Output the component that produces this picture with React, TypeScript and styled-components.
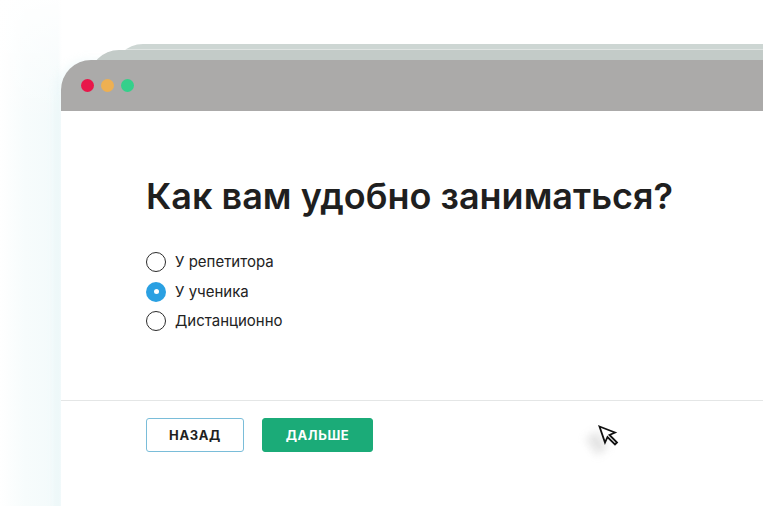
import React from "react";
import styled, { createGlobalStyle } from "styled-components";

const Global = createGlobalStyle`
  html, body { margin: 0; padding: 0; }
  body {
    width: 763px;
    height: 506px;
    overflow: hidden;
    background:
      linear-gradient(180deg, rgba(255,255,255,0.9) 0px, rgba(255,255,255,0) 120px),
      linear-gradient(90deg, #ffffff 0px, #f7fcfc 25px, #f3fafb 58px, #ffffff 62px);
    font-family: Inter, "Noto Sans", Roboto, sans-serif;
  }
`;

const Stage = styled.div`
  width: 763px;
  height: 506px;
  overflow: hidden;
  padding: 60px 0 0 61px;
  box-sizing: border-box;
`;

const Window = styled.div`
  position: relative;
  width: 760px;
  height: 460px;
  background: #ffffff;
  border-top-left-radius: 30px;
  box-shadow: -4px 0 10px rgba(210, 238, 242, 0.3);

  &::before,
  &::after {
    content: "";
    position: absolute;
    right: -40px;
    height: 40px;
    border-top-left-radius: 30px;
    z-index: 0;
  }
  &::before {
    left: 28px;
    top: -10px;
    background: #c3cbc8;
  }
  &::after {
    left: 52px;
    top: -16px;
    background: linear-gradient(180deg, #cdd6d3 0px, #cdd6d3 5px, #dfe4e2 5px, #dfe4e2 6px, #c2cbc8 6px);
    z-index: -1;
  }
`;

const TitleBar = styled.div`
  position: relative;
  z-index: 1;
  height: 51px;
  background: #abaaa9;
  border-top-left-radius: 30px;
  display: flex;
  align-items: center;
  gap: 7px;
  padding-left: 20px;
`;

const Dot = styled.span<{ $c: string }>`
  width: 13px;
  height: 13px;
  border-radius: 50%;
  background: ${(p) => p.$c};
`;

const Body = styled.div`
  position: relative;
  z-index: 1;
  background: #ffffff;
  padding: 63px 0 0 85px;
`;

const Title = styled.h1`
  margin: 0;
  font-family: Inter, "Noto Sans", sans-serif;
  font-weight: 600;
  font-size: 36px;
  line-height: 44px;
  color: #1f1f1f;
  letter-spacing: 0;
`;

const Options = styled.div`
  margin-top: 34px;
  display: flex;
  flex-direction: column;
  gap: 9.5px;
`;

const Option = styled.label`
  display: flex;
  align-items: center;
  gap: 9px;
  font-size: 15px;
  line-height: 20px;
  color: #222222;
  font-family: Inter, "Noto Sans", sans-serif;
`;

const Radio = styled.span<{ $on?: boolean }>`
  width: 20px;
  height: 20px;
  box-sizing: border-box;
  border-radius: 50%;
  border: ${(p) => (p.$on ? "none" : "1.5px solid #2b2b2b")};
  background: ${(p) => (p.$on ? "#2aa0e2" : "#ffffff")};
  display: flex;
  align-items: center;
  justify-content: center;
  &::after {
    content: "";
    width: 5px;
    height: 5px;
    border-radius: 50%;
    background: #ffffff;
    display: ${(p) => (p.$on ? "block" : "none")};
  }
`;

const Divider = styled.div`
  position: relative;
  z-index: 1;
  margin-top: 69px;
  height: 1px;
  background: #e4e6e6;
`;

const Footer = styled.div`
  position: relative;
  z-index: 1;
  display: flex;
  align-items: flex-start;
  gap: 18px;
  padding: 17px 0 0 85px;
`;

const Button = styled.button<{ $primary?: boolean }>`
  height: 34px;
  width: ${(p) => (p.$primary ? "111px" : "98px")};
  box-sizing: border-box;
  border-radius: 3px;
  border: 1px solid ${(p) => (p.$primary ? "#1bab78" : "#7abdd9")};
  background: ${(p) => (p.$primary ? "#1bab78" : "#ffffff")};
  color: ${(p) => (p.$primary ? "#ffffff" : "#1f1f1f")};
  font-family: Inter, "Noto Sans", sans-serif;
  font-weight: 700;
  font-size: 13px;
  letter-spacing: 0.6px;
  padding: 0;
`;

const Spacer = styled.div`
  flex: 0 0 189px;
`;

const Cursor = styled.div`
  position: relative;
  margin-top: 7px;
  width: 22px;
  height: 22px;
  &::before {
    content: "";
    position: absolute;
    left: -8px;
    top: 8px;
    width: 14px;
    height: 20px;
    background: rgba(130, 130, 130, 0.22);
    filter: blur(4px);
    transform: rotate(-35deg);
  }
  svg {
    position: relative;
  }
`;

export default function App() {
  return (
    <>
      <Global />
      <Stage>
        <Window>
          <TitleBar>
            <Dot $c="#e8174a" />
            <Dot $c="#eeb052" />
            <Dot $c="#34d08b" />
          </TitleBar>
          <Body>
            <Title>Как вам удобно заниматься?</Title>
            <Options>
              <Option>
                <Radio />У репетитора
              </Option>
              <Option>
                <Radio $on />У ученика
              </Option>
              <Option>
                <Radio />Дистанционно
              </Option>
            </Options>
          </Body>
          <Divider />
          <Footer>
            <Button>НАЗАД</Button>
            <Button $primary>ДАЛЬШЕ</Button>
            <Spacer />
            <Cursor>
              <svg width="22" height="22" viewBox="0 0 22 22">
                <path
                  d="M1.5 1.5 L17 7.5 L11.5 10 L19 17.5 L17 19.5 L9.5 12 L7 17.5 Z"
                  fill="#ffffff"
                  stroke="#111111"
                  strokeWidth="1.8"
                  strokeLinejoin="miter"
                />
              </svg>
            </Cursor>
          </Footer>
        </Window>
      </Stage>
    </>
  );
}
